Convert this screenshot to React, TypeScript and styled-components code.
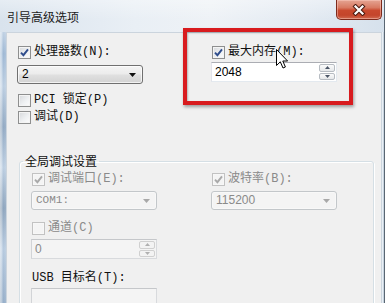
import React from "react";
import styled, { createGlobalStyle } from "styled-components";

const Global = createGlobalStyle`
  html, body { margin: 0; padding: 0; width: 385px; height: 303px; overflow: hidden; background: #f0f0f0; }
  #root { width: 385px; height: 303px; }
`;

const LABEL_FONT = `"Liberation Mono", "Noto Sans CJK SC", monospace`;
const VALUE_FONT = `"Liberation Sans", "Noto Sans CJK SC", sans-serif`;

const Window = styled.div`
  position: relative;
  width: 385px;
  height: 303px;
  box-sizing: border-box;
  border-right: 1px solid #5a6672;
  display: flex;
  flex-direction: column;
  overflow: hidden;
  background: #dfe8f1;
`;

const TitleBar = styled.div`
  flex: none;
  height: 32px;
  display: flex;
  justify-content: space-between;
  align-items: flex-start;
  background:
    linear-gradient(to bottom, rgba(255,255,255,0.35), rgba(255,255,255,0) 60%),
    linear-gradient(to right, #d9e3ed 0%, #e9eff5 35%, #eef2f6 55%, #e3eaf2 80%, #d6e1ec 100%);
`;

const Title = styled.span`
  margin: 10px 0 0 7px;
  font: 12px/14px "Noto Sans CJK SC", sans-serif;
  color: #1b1b1b;
`;

const CloseButton = styled.div`
  width: 46px;
  height: 20px;
  margin-right: 2px;
  box-sizing: border-box;
  border: 1px solid #7d2a1c;
  border-top: none;
  border-radius: 0 0 5px 5px;
  background: linear-gradient(to bottom, #e5a493 0%, #d87a62 40%, #c9492e 55%, #c4452b 80%, #d06a50 100%);
  box-shadow: inset 0 0 0 1px rgba(255, 210, 200, 0.45);
  display: flex;
  align-items: center;
  justify-content: center;
`;

const Body = styled.div`
  flex: 1;
  display: flex;
  min-height: 0;
`;

const LeftFrame = styled.div`
  flex: none;
  width: 6px;
  background:
    linear-gradient(to bottom, rgba(255,255,255,0.35) 0%, rgba(255,255,255,0) 8%, rgba(255,255,255,0.3) 20%, rgba(0,0,0,0.08) 35%, rgba(255,255,255,0.3) 50%, rgba(0,0,0,0.1) 65%, rgba(255,255,255,0.25) 80%, rgba(0,0,0,0.05) 100%),
    linear-gradient(to right, #d6e1ec 0, #c2d3e5 2px, #9db7d3 3px, #aac1da 6px);
`;

const RightFrame = styled.div`
  flex: none;
  width: 2px;
  background: linear-gradient(to right, #e9eff4 0 1px, #c6d3df 1px 2px);
`;

const Panel = styled.div`
  flex: 1;
  min-width: 0;
  background: #f0f0f0;
  border: 1px solid #cbd4dd;
  border-bottom: none;
  padding: 13px 0 0 10px;
`;

const ColumnsGrid = styled.div<{ $gap: number }>`
  display: grid;
  grid-template-columns: 126px 126px;
  column-gap: ${(p) => p.$gap}px;
  align-items: start;
`;

const Column = styled.div`
  display: flex;
  flex-direction: column;
`;

const Spacer = styled.div<{ $h: number }>`
  height: ${(p) => p.$h}px;
  flex: none;
`;

const CheckRow = styled.label<{ $disabled?: boolean }>`
  display: flex;
  align-items: center;
  gap: 3px;
  height: 13px;
  margin-left: 1px;
  font: 12px/13px ${LABEL_FONT};
  color: ${(p) => (p.$disabled ? "#8a8a8a" : "#111")};
  white-space: nowrap;
`;

const TextLabel = styled.div`
  height: 13px;
  margin-left: 1px;
  font: 12px/13px ${LABEL_FONT};
  color: #111;
  white-space: nowrap;
`;

const Box = styled.span<{ $disabled?: boolean }>`
  flex: none;
  width: 13px;
  height: 13px;
  box-sizing: border-box;
  border: 1px solid ${(p) => (p.$disabled ? "#c2c2c2" : "#8e8f8f")};
  background: ${(p) =>
    p.$disabled ? "#f4f4f4" : "linear-gradient(135deg, #d6d8db 0%, #eef0f2 55%, #fdfdfd 100%)"};
  box-shadow: inset 0 0 0 1px ${(p) => (p.$disabled ? "#f7f7f7" : "#f4f4f4")};
  display: flex;
  align-items: center;
  justify-content: center;
`;

const Combo = styled.div<{ $disabled?: boolean }>`
  width: 126px;
  height: 19px;
  box-sizing: border-box;
  border: 1px solid ${(p) => (p.$disabled ? "#c3c7ca" : "#707070")};
  border-radius: 3px;
  background: ${(p) =>
    p.$disabled ? "#f4f4f4" : "linear-gradient(to bottom, #f4f4f4 0%, #ececec 45%, #dfdfdf 55%, #d3d3d3 100%)"};
  box-shadow: inset 0 0 0 1px ${(p) => (p.$disabled ? "#f8f8f8" : "rgba(255,255,255,0.7)")};
  display: flex;
  align-items: center;
  justify-content: space-between;
  padding: 0 6px 0 4px;
`;

const ValueText = styled.span<{ $disabled?: boolean; $mono?: boolean }>`
  font: ${(p) => (p.$mono ? `11px/17px ${LABEL_FONT}` : `12px/17px ${VALUE_FONT}`)};
  color: ${(p) => (p.$disabled ? "#8a8a8a" : "#000")};
`;

const Field = styled.div<{ $disabled?: boolean }>`
  width: 126px;
  height: 20px;
  box-sizing: border-box;
  border: 1px solid;
  border-color: ${(p) =>
    p.$disabled ? "#c5c7ca #d8dadd #d8dadd #d2d4d7" : "#abadb3 #e3e9ef #e3e9ef #e2e3ea"};
  background: ${(p) => (p.$disabled ? "#f4f4f4" : "#fff")};
  display: flex;
  align-items: stretch;
`;

const FieldValue = styled.span`
  flex: 1;
  padding-left: 3px;
  display: flex;
  align-items: center;
`;

const SpinButtons = styled.div`
  flex: none;
  width: 17px;
  display: flex;
  flex-direction: column;
  gap: 1px;
  padding: 1px 1px 1px 0;
  box-sizing: border-box;
`;

const SpinBtn = styled.div<{ $disabled?: boolean }>`
  flex: 1;
  border: 1px solid ${(p) => (p.$disabled ? "#d0d0d0" : "#b7bcc2")};
  border-radius: 2px;
  background: ${(p) => (p.$disabled ? "#f3f3f3" : "linear-gradient(to bottom, #fbfbfb, #e6e8ea)")};
  display: flex;
  align-items: center;
  justify-content: center;
`;

const GroupBox = styled.fieldset`
  width: 355px;
  box-sizing: border-box;
  margin: 30px 0 0 2px;
  padding: 0;
  min-width: 0;
  border: 1px solid #d5dfe5;
  border-radius: 3px;
  box-shadow: inset 1px 1px 0 #fff, 1px 1px 0 #fff;
`;

const Legend = styled.legend`
  margin-left: 3px;
  padding: 0 2px;
  font: 12px/14px "Noto Sans CJK SC", sans-serif;
  color: #111;
`;

const GroupInner = styled.div`
  padding: 5px 0 40px 11px;
`;

const Highlight = styled.div`
  position: absolute;
  left: 183px;
  top: 28px;
  width: 170px;
  height: 77px;
  box-sizing: border-box;
  border: 4px solid #d81b1e;
  box-shadow: 1px 2px 3px rgba(0, 0, 0, 0.35), inset 1px 1px 2px rgba(0, 0, 0, 0.25);
  pointer-events: none;
`;

const Cursor = styled.svg`
  position: absolute;
  left: 276px;
  top: 49px;
`;

function Check({ checked, disabled }: { checked?: boolean; disabled?: boolean }) {
  return (
    <Box $disabled={disabled}>
      {checked && (
        <svg width="11" height="11" viewBox="0 0 11 11">
          <path
            d="M2 5.6 L4.4 8.2 L9 2.3"
            fill="none"
            stroke={disabled ? "#a9a9a9" : "#2f4d8c"}
            strokeWidth="1.9"
          />
        </svg>
      )}
    </Box>
  );
}

function CheckField({ label, checked, disabled }: { label: string; checked?: boolean; disabled?: boolean }) {
  return (
    <CheckRow $disabled={disabled}>
      <Check checked={checked} disabled={disabled} />
      <span>{label}</span>
    </CheckRow>
  );
}

function DownArrow({ disabled }: { disabled?: boolean }) {
  return (
    <svg width="7" height="4" viewBox="0 0 7 4">
      <polygon points="0,0 7,0 3.5,4" fill={disabled ? "#a8a8a8" : "#111"} />
    </svg>
  );
}

function ComboBox({ value, disabled, mono }: { value: string; disabled?: boolean; mono?: boolean }) {
  return (
    <Combo $disabled={disabled}>
      <ValueText $disabled={disabled} $mono={mono}>{value}</ValueText>
      <DownArrow disabled={disabled} />
    </Combo>
  );
}

function SpinField({ value, disabled }: { value: string; disabled?: boolean }) {
  const c = disabled ? "#b0b0b0" : "#4a5566";
  return (
    <Field $disabled={disabled}>
      <FieldValue>
        <ValueText $disabled={disabled}>{value}</ValueText>
      </FieldValue>
      <SpinButtons>
        <SpinBtn $disabled={disabled}>
          <svg width="5" height="3" viewBox="0 0 5 3">
            <polygon points="0,3 5,3 2.5,0" fill={c} />
          </svg>
        </SpinBtn>
        <SpinBtn $disabled={disabled}>
          <svg width="5" height="3" viewBox="0 0 5 3">
            <polygon points="0,0 5,0 2.5,3" fill={c} />
          </svg>
        </SpinBtn>
      </SpinButtons>
    </Field>
  );
}

export default function App() {
  return (
    <>
      <Global />
      <Window>
        <TitleBar>
          <Title>引导高级选项</Title>
          <CloseButton>
            <svg width="14" height="12" viewBox="0 0 14 12">
              <path d="M3.5 2.5 L10.5 9.5 M10.5 2.5 L3.5 9.5" stroke="#4a1a10" strokeWidth="4.2" strokeLinecap="square" />
              <path d="M3.5 2.5 L10.5 9.5 M10.5 2.5 L3.5 9.5" stroke="#fff" strokeWidth="2.2" strokeLinecap="square" />
            </svg>
          </CloseButton>
        </TitleBar>
        <Body>
          <LeftFrame />
          <Panel>
            <ColumnsGrid $gap={68}>
              <Column>
                <CheckField label="处理器数(N):" checked />
                <Spacer $h={6} />
                <ComboBox value="2" />
                <Spacer $h={10} />
                <CheckField label="PCI 锁定(P)" />
                <Spacer $h={4} />
                <CheckField label="调试(D)" />
              </Column>
              <Column>
                <CheckField label="最大内存(M):" checked />
                <Spacer $h={3} />
                <SpinField value="2048" />
              </Column>
            </ColumnsGrid>
            <GroupBox>
              <Legend>全局调试设置</Legend>
              <GroupInner>
                <ColumnsGrid $gap={54}>
                  <Column>
                    <CheckField label="调试端口(E):" checked disabled />
                    <Spacer $h={5} />
                    <ComboBox value="COM1:" disabled mono />
                    <Spacer $h={12} />
                    <CheckField label="通道(C)" disabled />
                    <Spacer $h={4} />
                    <SpinField value="0" disabled />
                    <Spacer $h={13} />
                    <TextLabel>USB 目标名(T):</TextLabel>
                    <Spacer $h={3} />
                    <Field $disabled />
                  </Column>
                  <Column>
                    <CheckField label="波特率(B):" checked disabled />
                    <Spacer $h={5} />
                    <ComboBox value="115200" disabled />
                  </Column>
                </ColumnsGrid>
              </GroupInner>
            </GroupBox>
          </Panel>
          <RightFrame />
        </Body>
        <Highlight />
        <Cursor width="13" height="20" viewBox="0 0 13 20">
          <path
            d="M0.5 0.5 L0.5 16.5 L4.3 12.8 L7 19 L9.4 18 L6.8 12 L11.6 12 Z"
            fill="#fff"
            stroke="#000"
            strokeWidth="1"
            strokeLinejoin="miter"
          />
        </Cursor>
      </Window>
    </>
  );
}
